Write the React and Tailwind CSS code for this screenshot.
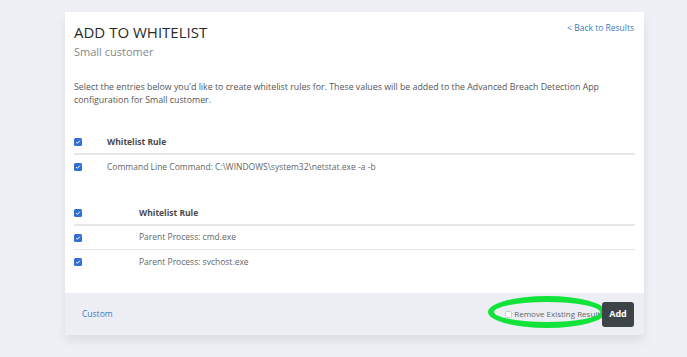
import React from "react";

const Check = () => (
  <span className="inline-flex items-center justify-center w-[8px] h-[8px] rounded-[1.5px] bg-[#2f6fd1]">
    <svg viewBox="0 0 8 8" className="w-[6px] h-[6px]">
      <path d="M1.5 4.2 L3.2 5.8 L6.5 2.2" fill="none" stroke="white" strokeWidth="1.3" />
    </svg>
  </span>
);

const Row = ({ label, indent, bold, border }) => (
  <div className={`flex items-center h-[24px] ${border}`}>
    <Check />
    <div className={`${indent} ${bold ? "font-bold text-[#4a4a4a]" : "text-[#666]"} text-[8.5px]`}>{label}</div>
  </div>
);

export default function App() {
  return (
    <div className="w-[687px] h-[357px] bg-[#eef0f5] pt-[12px] pl-[65px] font-['Open_Sans',sans-serif] overflow-hidden">
      <div className="w-[579px] bg-white shadow-[0_6px_10px_rgba(0,0,0,0.08)]">
        <div className="px-[9px] pt-[10px]">
          <div className="flex justify-between">
            <div>
              <div className="text-[15px] leading-[21px] text-[#2a2a2a]">ADD TO WHITELIST</div>
              <div className="text-[11px] leading-[18px] text-[#888]">Small customer</div>
            </div>
            <a className="text-[8.5px] text-[#3a7bc4] mt-[0px] pr-[1px]">&lt; Back to Results</a>
          </div>
          <p className="text-[8.8px] leading-[13px] text-[#555] mt-[20px] max-w-[535px]">
            Select the entries below you'd like to create whitelist rules for. These values will be added to the Advanced Breach Detection App configuration for Small customer.
          </p>
          <div className="mt-[24px]">
            <Row label="Whitelist Rule" indent="ml-[25px]" bold border="border-b-2 border-[#e6e6e6]" />
            <Row label="Command Line Command: C:\WINDOWS\system32\netstat.exe -a -b" indent="ml-[25px]" border="" />
          </div>
          <div className="mt-[23px] pb-[19px]">
            <Row label="Whitelist Rule" indent="ml-[57px]" bold border="border-b-2 border-[#e6e6e6]" />
            <Row label="Parent Process: cmd.exe" indent="ml-[57px]" border="border-b border-[#e6e6e6]" />
            <Row label="Parent Process: svchost.exe" indent="ml-[57px]" border="" />
          </div>
        </div>
        <div className="h-[42px] bg-[#eceef4] flex items-center justify-between pl-[17px] pr-[10px]">
          <a className="text-[8.5px] text-[#3a7bc4]">Custom</a>
          <div className="flex items-center">
            <div className="relative flex items-center mr-[-2px]">
              <span className="w-[7px] h-[7px] bg-white border border-[#ccc] rounded-[1.5px] mr-[2px]" />
              <span className="text-[8px] text-[#666] whitespace-nowrap">Remove Existing Results</span>
              <div className="absolute left-[-17px] top-[-12px] w-[118px] h-[32px] rounded-[50%] border-[6px] border-[#12e33a]" />
            </div>
            <button className="relative w-[32px] h-[25px] rounded-[3px] bg-[#3d4447] text-white text-[9px] font-bold">Add</button>
          </div>
        </div>
      </div>
    </div>
  );
}
